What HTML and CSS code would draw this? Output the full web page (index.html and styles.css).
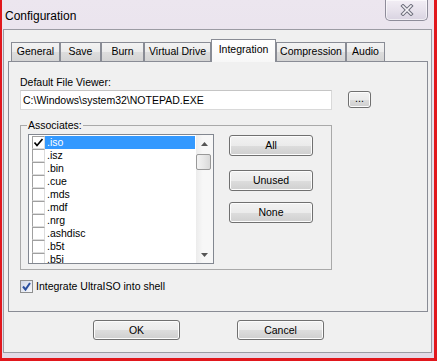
FILE: index.html
```html
<!DOCTYPE html>
<html lang="en">
<head>
  <meta charset="UTF-8" />
  <title>Configuration</title>
  <link rel="stylesheet" href="styles.css">
</head>
<body>
  <div class="window">
    <div class="titlebar">
      <span class="title">Configuration</span>
      <div class="close">
        <svg width="14" height="12" viewBox="0 0 14 12">
          <path d="M3 2 L11 10 M11 2 L3 10" stroke="#6d6e7c" stroke-width="3.6" stroke-linecap="square"/>
          <path d="M3 2 L11 10 M11 2 L3 10" stroke="#f4f2f6" stroke-width="1.6" stroke-linecap="square"/>
        </svg>
      </div>
    </div>

    <div class="client">
      <div class="tabs">
        <div class="tab t-general">General</div>
        <div class="tab t-save">Save</div>
        <div class="tab t-burn">Burn</div>
        <div class="tab t-vdrive">Virtual Drive</div>
        <div class="tab t-integ active">Integration</div>
        <div class="tab t-comp">Compression</div>
        <div class="tab t-audio">Audio</div>
      </div>

      <div class="page">
        <div class="field-label">Default File Viewer:</div>
        <div class="viewer-row">
          <div class="textbox">C:\Windows\system32\NOTEPAD.EXE</div>
          <div class="btn btn-browse">...</div>
        </div>

        <fieldset class="group">
          <legend>Associates:</legend>
          <div class="group-body">
            <div class="listbox">
              <div class="items">
                <div class="item selected"><span class="cb checked"><svg width="11" height="11" viewBox="0 0 11 11"><path d="M1.5 5.5 L4 8.5 L9.5 2" stroke="#000" stroke-width="1.7" fill="none"/></svg></span><span class="name">.iso</span></div>
                <div class="item"><span class="cb"></span><span class="name">.isz</span></div>
                <div class="item"><span class="cb"></span><span class="name">.bin</span></div>
                <div class="item"><span class="cb"></span><span class="name">.cue</span></div>
                <div class="item"><span class="cb"></span><span class="name">.mds</span></div>
                <div class="item"><span class="cb"></span><span class="name">.mdf</span></div>
                <div class="item"><span class="cb"></span><span class="name">.nrg</span></div>
                <div class="item"><span class="cb"></span><span class="name">.ashdisc</span></div>
                <div class="item"><span class="cb"></span><span class="name">.b5t</span></div>
                <div class="item"><span class="cb"></span><span class="name">.b5i</span></div>
              </div>
              <div class="scrollbar">
                <div class="arrow"><svg width="7" height="4" viewBox="0 0 7 4"><path d="M0 4 L3.5 0 L7 4 Z" fill="#555"/></svg></div>
                <div class="thumb"></div>
                <div class="track"></div>
                <div class="arrow"><svg width="7" height="4" viewBox="0 0 7 4"><path d="M0 0 L3.5 4 L7 0 Z" fill="#555"/></svg></div>
              </div>
            </div>
            <div class="side-buttons">
              <div class="btn btn-side">All</div>
              <div class="btn btn-side gap-a">Unused</div>
              <div class="btn btn-side gap-b">None</div>
            </div>
          </div>
        </fieldset>

        <div class="shell-row">
          <span class="cb7">
            <svg width="13" height="13" viewBox="0 0 13 13">
              <path d="M3 6.5 L5.5 9.5 L10 3" stroke="#2a4f9e" stroke-width="2" fill="none"/>
            </svg>
          </span>
          <span>Integrate UltraISO into shell</span>
        </div>
      </div>

      <div class="footer">
        <div class="btn btn-foot">OK</div>
        <div class="btn btn-foot">Cancel</div>
      </div>
    </div>
  </div>
</body>
</html>
```

FILE: styles.css
```css
* { box-sizing: border-box; }
body {
  margin: 0;
  width: 437px;
  height: 361px;
  overflow: hidden;
  font-family: 'Liberation Sans', Arial, sans-serif;
  font-size: 10.5px;
  color: #000;
  background: #fff;
}
.window {
  width: 437px;
  height: 361px;
  border: 2px solid #e1171d;
  border-top: 0;
  border-right-width: 3px;
  border-bottom-width: 3px;
  background: linear-gradient(180deg, #ece6ef 0%, #e6dfea 40%, #e3dbe8 100%);
  display: flex;
  flex-direction: column;
}
.titlebar {
  height: 29px;
  display: flex;
  justify-content: space-between;
  align-items: flex-start;
}
.title {
  font-size: 12px;
  line-height: 14px;
  padding: 9px 0 0 3px;
}
.close {
  width: 43px;
  height: 21px;
  margin-right: 6px;
  border: 1px solid #8e8c9a;
  border-top: 0;
  border-radius: 0 0 5px 5px;
  background: linear-gradient(180deg, #f2eef5 0%, #e7e2ec 50%, #d9d3e1 100%);
  box-shadow: inset 0 0 0 1px rgba(255,255,255,0.6);
  display: flex;
  align-items: center;
  justify-content: center;
}
.client {
  margin-left: 1px;
  width: 429px;
  height: 324px;
  border: 1px solid #9b9ba3;
  background: #f0f0f0;
}
.tabs {
  display: flex;
  align-items: flex-end;
  padding-left: 7px;
  margin-top: 9px;
  height: 22px;
  position: relative;
  z-index: 1;
}
.tab {
  height: 19px;
  line-height: 17px;
  border: 1px solid #898c95;
  border-bottom: 0;
  background: linear-gradient(180deg, #f3f3f3 0%, #ebebeb 50%, #dddddd 51%, #d4d4d4 100%);
  text-align: center;
}
.t-general { width: 49px; }
.t-save { width: 41px; }
.t-burn { width: 43px; }
.t-vdrive { width: 67px; }
.t-integ { width: 65px; }
.t-comp { width: 70px; }
.t-audio { width: 39px; }
.tab.active {
  height: 23px;
  line-height: 19px;
  margin-bottom: -1px;
  background: linear-gradient(180deg, #ffffff 0%, #f7f7f7 100%);
}
.page {
  margin-left: 4px;
  width: 420px;
  height: 251px;
  border: 1px solid #898c95;
  background: #f0f0f0;
  padding: 14px 0 0 11px;
}
.field-label { line-height: 13px; }
.viewer-row {
  display: flex;
  align-items: flex-start;
  margin-top: 1px;
}
.textbox {
  width: 312px;
  height: 20px;
  border: 1px solid #d9d9d9;
  border-top-color: #c5c5c5;
  background: #fff;
  line-height: 18px;
  padding-left: 2px;
}
.btn {
  border: 1px solid #707070;
  border-radius: 3px;
  background: linear-gradient(180deg, #f2f2f2 0%, #ebebeb 50%, #dddddd 51%, #cfcfcf 100%);
  box-shadow: inset 0 0 0 1px #fcfcfc;
  text-align: center;
}
.btn-browse {
  width: 23px;
  height: 17px;
  line-height: 13px;
  margin: 1px 0 0 16px;
}
.group {
  margin: 9px 0 0;
  width: 312px;
  height: 151px;
  border: 1px solid #a9a9a9;
  padding: 0;
}
.group legend {
  margin-left: 6px;
  padding: 0 1px;
  line-height: 13px;
}
.group-body {
  display: flex;
  align-items: flex-start;
  padding: 2px 0 0 7px;
}
.listbox {
  width: 186px;
  height: 130px;
  border: 1px solid #828790;
  background: #fff;
  display: flex;
}
.items {
  flex: 1;
  padding: 1px 1px 0 3px;
  overflow: hidden;
}
.item {
  display: flex;
  height: 13px;
  line-height: 13px;
}
.cb {
  width: 13px;
  height: 13px;
  border: 1px solid #a0a0a0;
  border-right-color: #dcdcdc;
  border-bottom-color: #dcdcdc;
  background: #fff;
  flex: none;
}
.cb svg { display: block; }
.name {
  flex: 1;
  padding-left: 2px;
}
.item.selected .name {
  background: #3399ff;
  color: #fff;
}
.scrollbar {
  width: 17px;
  display: flex;
  flex-direction: column;
  background: linear-gradient(90deg, #ececec 0%, #f7f7f7 40%, #f7f7f7 100%);
}
.arrow {
  height: 17px;
  display: flex;
  align-items: center;
  justify-content: center;
}
.thumb {
  height: 16px;
  margin: 2px 2px 0 0;
  border: 1px solid #999;
  border-radius: 2px;
  background: linear-gradient(90deg, #f3f3f3 0%, #e8e8e8 50%, #d9d9d9 100%);
}
.track { flex: 1; }
.side-buttons {
  display: flex;
  flex-direction: column;
  margin-left: 15px;
  padding-top: 1px;
}
.btn-side {
  width: 84px;
  height: 21px;
  line-height: 19px;
}
.gap-a { margin-top: 14px; }
.gap-b { margin-top: 11px; }
.shell-row {
  display: flex;
  align-items: center;
  gap: 3px;
  margin-top: 10px;
  line-height: 13px;
}
.cb7 {
  width: 13px;
  height: 13px;
  border: 1px solid #8e8f8f;
  background: linear-gradient(135deg, #cfd6e5 0%, #e9ecf4 60%, #f8f9fb 100%);
  display: flex;
}
.cb7 svg { margin: -1px; }
.footer {
  display: flex;
  gap: 57px;
  padding: 8px 0 0 89px;
}
.btn-foot {
  width: 87px;
  height: 20px;
  line-height: 18px;
}
```
